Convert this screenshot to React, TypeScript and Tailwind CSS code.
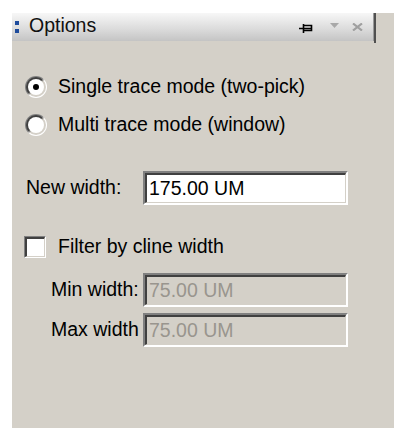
import React from 'react';

const font = { fontFamily: '"Liberation Sans", Arial, sans-serif' };

const Radio: React.FC<{ checked?: boolean; label: string }> = ({ checked, label }) => (
  <div className="flex items-center h-[22px]">
    <div className="ml-[13px] w-[22px] h-[22px] rounded-full bg-[linear-gradient(135deg,#808080_0%,#808080_45%,#ffffff_55%,#ffffff_100%)] p-[1px]">
      <div className="w-full h-full rounded-full bg-[linear-gradient(135deg,#404040_0%,#404040_45%,#d4d0c8_55%,#d4d0c8_100%)] p-[2px]">
        <div className="w-full h-full rounded-full bg-white flex items-center justify-center">
          {checked && <div className="w-[6px] h-[6px] rounded-full bg-black" />}
        </div>
      </div>
    </div>
    <span className="ml-[11px] text-[19.5px] text-black leading-none">{label}</span>
  </div>
);

const Field: React.FC<{ value: string; disabled?: boolean; className?: string }> = ({ value, disabled, className }) => (
  <div
    className={`h-[34px] w-[205px] border-t-[2px] border-l-[2px] border-t-[#808080] border-l-[#808080] border-b-[2px] border-r-[2px] border-b-white border-r-white ${className ?? ''}`}
  >
    <div
      className={`h-full border-t-[2px] border-l-[2px] border-t-[#404040] border-l-[#404040] border-b-[1px] border-r-[1px] border-b-[#d4d0c8] border-r-[#d4d0c8] flex items-center pl-[2px] text-[19.5px] leading-none ${
        disabled ? 'bg-[#d4d0c8] text-[#99958e]' : 'bg-white text-black'
      }`}
    >
      {value}
    </div>
  </div>
);

export default function App() {
  return (
    <div className="w-[406px] h-[443px] bg-white pt-[13px] pl-[12px]" style={font}>
      <div className="w-[382px] h-[415px] bg-[#d4d0c8] flex flex-col">
        {/* Title bar */}
        <div className="flex h-[28px] shrink-0">
          <div className="flex-1 flex items-center bg-[linear-gradient(#f7f7f7,#dadada_60%,#c4c4c4)]">
            <div className="ml-[3px] flex flex-col gap-[4px] pb-[1px]">
              <div className="w-[4px] h-[4px] bg-[#1e4b9c]" />
              <div className="w-[4px] h-[4px] bg-[#1e4b9c]" />
            </div>
            <span className="ml-[10px] text-[19.5px] leading-none text-[#111] pb-[3px]">Options</span>
            <div className="ml-auto flex items-center mr-[10px]">
              <svg width="14" height="9" viewBox="0 0 14 9" className="mt-[3px]">
                <path d="M0 4.5H4M4.5 0V9M4.5 1.5H12.5V6.5H4.5M4.5 4.5H12.5" stroke="#000" strokeWidth="1.6" fill="none" />
              </svg>
              <svg width="9" height="5" viewBox="0 0 9 5" className="ml-[17px] -mt-[3px]">
                <path d="M0 0H9L4.5 5Z" fill="#a8a8a8" />
              </svg>
              <svg width="11" height="8" viewBox="0 0 11 8" className="ml-[13px] -mt-[1px]">
                <path d="M1 0.5L10 7.5M10 0.5L1 7.5" stroke="#a0a0a0" strokeWidth="2.2" fill="none" />
              </svg>
            </div>
          </div>
          <div className="w-[1px] bg-[#9a9a9a]" />
          <div className="w-[2px] bg-[#505050] h-[30px]" />
          <div className="w-[18px]" />
        </div>

        {/* Body */}
        <div className="flex flex-col">
          <div className="mt-[35px]">
            <Radio checked label="Single trace mode (two-pick)" />
          </div>
          <div className="mt-[16px]">
            <Radio label="Multi trace mode (window)" />
          </div>

          <div className="mt-[35px] flex items-center">
            <span className="ml-[14px] w-[117px] text-[19.5px] leading-none text-black">New width:</span>
            <Field value="175.00 UM" />
          </div>

          <div className="mt-[31px] flex items-center h-[22px]">
            <div className="ml-[12px] w-[22px] h-[22px] border-t-[1px] border-l-[1px] border-t-[#808080] border-l-[#808080] border-b-[1px] border-r-[1px] border-b-white border-r-white">
              <div className="w-full h-full border-t-[2px] border-l-[2px] border-t-[#404040] border-l-[#404040] border-b-[1px] border-r-[1px] border-b-[#d4d0c8] border-r-[#d4d0c8] bg-white" />
            </div>
            <span className="ml-[12px] text-[19.5px] leading-none text-black">Filter by cline width</span>
          </div>

          <div className="mt-[15px] flex items-center">
            <span className="ml-[39px] w-[92px] text-[19.5px] leading-none text-black whitespace-nowrap">Min width:</span>
            <Field value="75.00 UM" disabled />
          </div>
          <div className="mt-[6px] flex items-center">
            <span className="ml-[39px] w-[92px] text-[19.5px] leading-none text-black whitespace-nowrap">Max width</span>
            <Field value="75.00 UM" disabled />
          </div>
        </div>
      </div>
    </div>
  );
}
